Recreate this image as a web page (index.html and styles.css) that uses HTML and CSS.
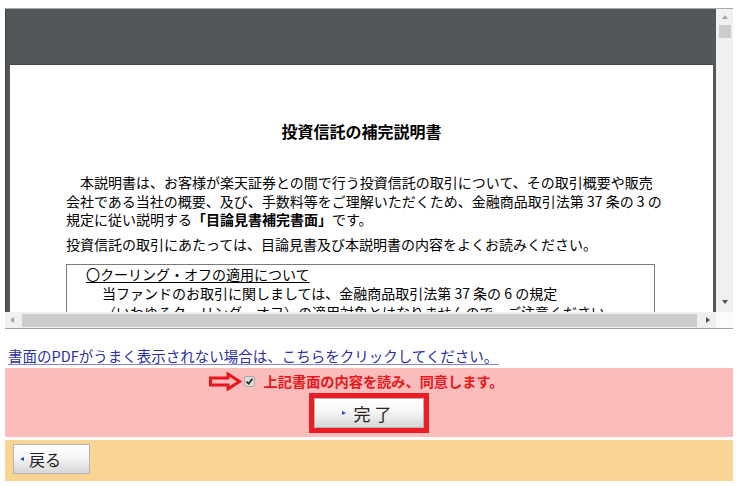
FILE: index.html
```html
<!DOCTYPE html>
<html lang="ja">
<head>
<meta charset="utf-8">
<title>投資信託の補完説明書</title>
<link rel="stylesheet" href="styles.css">
</head>
<body>
<div class="viewer">
  <div class="pane">
    <div class="page">
      <h1 class="doc-title">投資信託の補完説明書</h1>
      <p class="doc-p indent">本説明書は、お客様が楽天証券との間で行う投資信託の取引について、その取引概要や販売<br>会社である当社の概要、及び、手数料等をご理解いただくため、金融商品取引法第 37 条の 3 の<br>規定に従い説明する<b>「目論見書補完書面」</b>です。</p>
      <p class="doc-p second">投資信託の取引にあたっては、目論見書及び本説明書の内容をよくお読みください。</p>
      <div class="doc-box">
        <div class="box-head">〇クーリング・オフの適用について</div>
        <div class="box-text">当ファンドのお取引に関しましては、金融商品取引法第 37 条の 6 の規定<br>（いわゆるクーリング・オフ）の適用対象とはなりませんので、ご注意ください。</div>
      </div>
    </div>
  </div>
  <div class="vscroll">
    <span class="arr-up"></span>
    <span class="vthumb"></span>
    <span class="fill"></span>
    <span class="arr-down"></span>
  </div>
  <div class="hscroll">
    <span class="arr-left"></span>
    <span class="hthumb"></span>
    <span class="fill"></span>
    <span class="arr-right"></span>
  </div>
  <div class="corner"></div>
</div>

<div class="link-row"><a class="pdf-link" href="#">書面のPDFがうまく表示されない場合は、こちらをクリックしてください。</a></div>

<div class="agree">
  <div class="agree-row">
    <svg class="hint-arrow" width="33" height="19" viewBox="0 0 33 19"><polygon points="1.5,6 19,6 19,2 30.5,9.5 19,17 19,13 1.5,13" fill="none" stroke="#e8171d" stroke-width="3" stroke-linejoin="miter"/></svg>
    <span class="check"><svg width="11" height="11" viewBox="0 0 11 11"><rect x="0.5" y="0.5" width="10" height="10" rx="1.5" fill="#dcdcdc" stroke="#a8a8a8"/><path d="M2.6 5.6 L4.6 7.8 L8.4 2.8" fill="none" stroke="#222" stroke-width="1.6"/></svg></span>
    <span class="agree-text">上記書面の内容を読み、同意します。</span>
  </div>
  <div class="done-frame">
    <button class="btn btn-done" type="button"><span class="bullet-right"></span>完 了</button>
  </div>
</div>

<div class="footer">
  <button class="btn btn-back" type="button"><span class="bullet-left"></span>戻る</button>
</div>
</body>
</html>
```

FILE: styles.css
```css
body {
  margin: 0;
  font-family: "Noto Sans CJK JP", "Noto Sans", sans-serif;
  background: #fff;
}

.viewer {
  margin: 8px 0 0 5px;
  width: 728px;
  display: grid;
  grid-template-columns: 711px 17px;
  grid-template-rows: 303px 16px;
  border-top: 1px solid #a9abad;
  border-bottom: 1px solid #a0a0a0;
}

.pane {
  background: #53575b;
  overflow: hidden;
  padding: 56px 3px 0 5px;
  box-shadow: inset 1px 0 0 #3e4245;
}

.page {
  background: #fff;
  height: 700px;
  padding-top: 55px;
  color: #000;
  box-shadow: 0 -1px 0 #44484b;
}

.doc-title {
  margin: 0;
  font-size: 16px;
  line-height: 22px;
  font-weight: bold;
  text-align: center;
}

.doc-p {
  margin: 31px 0 0 56px;
  font-size: 14px;
  line-height: 18.5px;
}

.doc-p b {
  font-weight: bold;
}

.indent {
  text-indent: 14px;
}

.doc-p.second {
  margin-top: 6.5px;
}

.doc-box {
  margin: 10.5px 0 0 56px;
  width: 589px;
  box-sizing: border-box;
  border: 1px solid #7a7a7a;
  padding-left: 19px;
  font-size: 14px;
  line-height: 19px;
}

.box-head {
  text-decoration: underline;
  text-underline-offset: 2px;
}

.box-text {
  padding-left: 16px;
}

.vscroll {
  background: #f0f0f0;
  display: flex;
  flex-direction: column;
  align-items: center;
}

.arr-up {
  margin-top: 6px;
  width: 0;
  height: 0;
  border-left: 3.5px solid transparent;
  border-right: 3.5px solid transparent;
  border-bottom: 4px solid #a3a3a3;
}

.vthumb {
  margin-top: 6px;
  width: 12px;
  height: 13px;
  background: #cdcdcd;
}

.fill {
  flex: 1;
}

.arr-down {
  margin-bottom: 8px;
  width: 0;
  height: 0;
  border-left: 3.5px solid transparent;
  border-right: 3.5px solid transparent;
  border-top: 4px solid #505050;
}

.hscroll {
  background: #f0f0f0;
  display: flex;
  align-items: center;
}

.arr-left {
  margin-left: 5px;
  width: 0;
  height: 0;
  border-top: 3.5px solid transparent;
  border-bottom: 3.5px solid transparent;
  border-right: 4px solid #a3a3a3;
}

.hthumb {
  margin-left: 8px;
  width: 675px;
  height: 13px;
  background: #cdcdcd;
}

.arr-right {
  margin-right: 6px;
  width: 0;
  height: 0;
  border-top: 3.5px solid transparent;
  border-bottom: 3.5px solid transparent;
  border-left: 4px solid #505050;
}

.corner {
  background: #fbfbfb;
}

.link-row {
  margin: 17px 0 0 8px;
  line-height: 18px;
}

.pdf-link {
  font-size: 14.5px;
  color: #2a2f9e;
  text-decoration: underline;
  text-decoration-color: #7f86c8;
  text-underline-offset: 2px;
}

.agree {
  margin: 3px 0 0 5px;
  width: 728px;
  height: 69px;
  background: #fbbcbc;
  padding-top: 3px;
  box-sizing: border-box;
}

.agree-row {
  display: flex;
  justify-content: center;
  align-items: center;
  height: 20px;
  padding-right: 26px;
}

.hint-arrow {
  display: block;
}

.check {
  display: block;
  margin-left: 2px;
  height: 11px;
}

.check svg {
  display: block;
}

.agree-text {
  margin-left: 9px;
  color: #e8171d;
  font-weight: bold;
  font-size: 14.2px;
  line-height: 20px;
}

.done-frame {
  margin: 2px auto 0;
  width: fit-content;
  border: 5px solid #ec1c24;
}

.btn {
  font-family: "Noto Sans CJK JP", "Noto Sans", sans-serif;
  color: #222;
  border: 1px solid #b4b4b4;
  background: linear-gradient(#ffffff 0%, #f6f6f6 45%, #e2e2e2 80%, #d6d6d6 100%);
  display: flex;
  align-items: center;
  padding: 0;
  margin: 0;
  box-sizing: border-box;
}

.btn-done {
  width: 110px;
  height: 30px;
  justify-content: center;
  font-size: 17px;
  padding-right: 5px;
}

.bullet-right {
  width: 0;
  height: 0;
  border-top: 2.5px solid transparent;
  border-bottom: 2.5px solid transparent;
  border-left: 4px solid #2447b8;
  margin-right: 8px;
}

.footer {
  margin: 3px 0 0 5px;
  width: 728px;
  height: 41px;
  background: #fad492;
  padding: 4px 0 0 8px;
  box-sizing: border-box;
}

.btn-back {
  width: 77px;
  height: 30px;
  font-size: 16px;
  padding-left: 6px;
}

.bullet-left {
  width: 0;
  height: 0;
  border-top: 2.5px solid transparent;
  border-bottom: 2.5px solid transparent;
  border-right: 4px solid #2447b8;
  margin-right: 5px;
}
```
